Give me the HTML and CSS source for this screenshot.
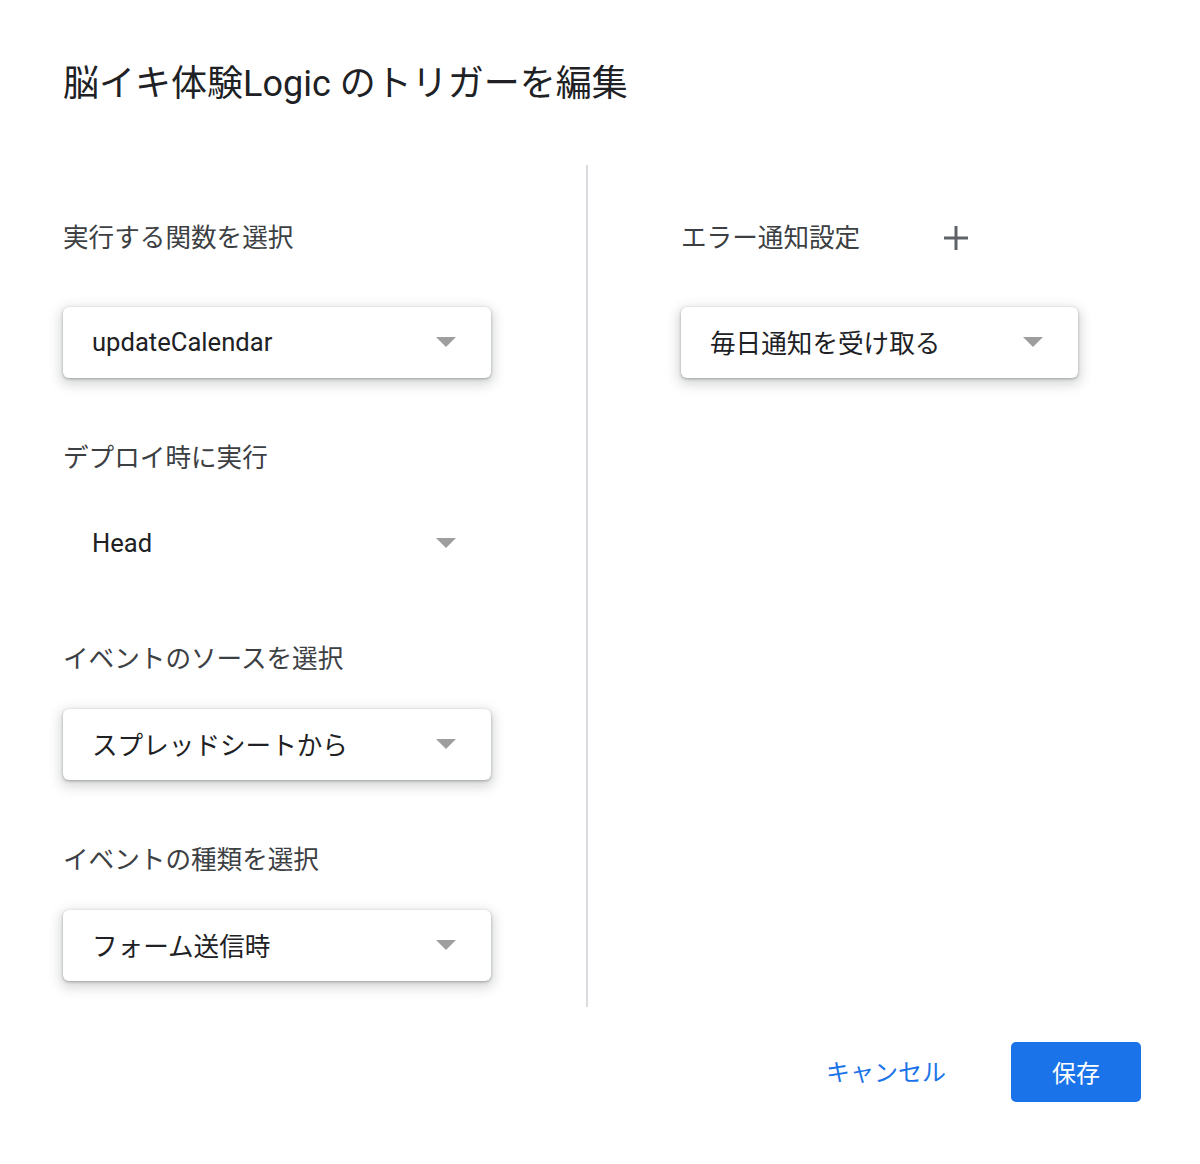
FILE: index.html
```html
<!DOCTYPE html>
<html lang="ja">
<head>
<meta charset="utf-8">
<link rel="stylesheet" href="styles.css">
</head>
<body>
<div class="dialog">
  <h1 class="title">脳イキ体験Logic のトリガーを編集</h1>
  <div class="columns">
    <div class="col-left">
      <div class="label label-first">実行する関数を選択</div>
      <div class="select"><span>updateCalendar</span><i class="arrow"></i></div>
      <div class="label">デプロイ時に実行</div>
      <div class="select flat"><span>Head</span><i class="arrow"></i></div>
      <div class="label">イベントのソースを選択</div>
      <div class="select"><span>スプレッドシートから</span><i class="arrow"></i></div>
      <div class="label">イベントの種類を選択</div>
      <div class="select"><span>フォーム送信時</span><i class="arrow"></i></div>
    </div>
    <div class="divider"></div>
    <div class="col-right">
      <div class="label label-first row-label">
        <span>エラー通知設定</span>
        <svg class="plus" width="26" height="26" viewBox="0 0 26 26"><path d="M13 1v24M1 13h24" stroke="#5f6368" stroke-width="3" fill="none"/></svg>
      </div>
      <div class="select narrow"><span>毎日通知を受け取る</span><i class="arrow"></i></div>
    </div>
  </div>
  <div class="actions">
    <button class="btn-text">キャンセル</button>
    <button class="btn-primary">保存</button>
  </div>
</div>
</body>
</html>
```
FILE: styles.css
```css
html, body {
  margin: 0;
  padding: 0;
  background: #fff;
}
body {
  font-family: Roboto, "Noto Sans CJK JP", sans-serif;
  color: #202124;
}
.dialog {
  width: 1200px;
  height: 1164px;
  box-sizing: border-box;
  padding: 60px 59px 0 63px;
}
.title {
  margin: 0;
  font-size: 36px;
  font-weight: 400;
  line-height: 48px;
  color: #202124;
}
.columns {
  display: flex;
  margin-top: 57px;
  height: 842px;
}
.col-left {
  width: 523px;
  display: flex;
  flex-direction: column;
}
.divider {
  width: 2px;
  background: #dadce0;
  height: 842px;
}
.col-right {
  padding-left: 93px;
  display: flex;
  flex-direction: column;
}
.label {
  font-size: 25.6px;
  line-height: 40px;
  color: #3c4043;
  margin-top: 60px;
  margin-bottom: 30px;
}
.label.label-first {
  margin-top: 53px;
  margin-bottom: 49px;
}
.row-label {
  display: flex;
  align-items: center;
  gap: 83px;
}
.plus {
  display: block;
}
.select {
  width: 428px;
  height: 71px;
  box-sizing: border-box;
  border-radius: 6px;
  background: #fff;
  box-shadow: 0 1px 3px rgba(60, 64, 67, 0.4), 0 4px 12px 3px rgba(60, 64, 67, 0.2);
  display: flex;
  align-items: center;
  justify-content: space-between;
  padding: 0 35px 2px 29px;
  font-size: 25.6px;
  color: #202124;
}
.select.flat {
  box-shadow: none;
}
.select.narrow {
  width: 397px;
}
.arrow {
  width: 0;
  height: 0;
  border-left: 10px solid transparent;
  border-right: 10px solid transparent;
  border-top: 10px solid #9e9e9e;
}
.actions {
  display: flex;
  justify-content: flex-end;
  align-items: center;
  gap: 65px;
  margin-top: 35px;
}
button {
  font-family: Roboto, "Noto Sans CJK JP", sans-serif;
  font-size: 24px;
  border: none;
  cursor: pointer;
}
.btn-text {
  background: transparent;
  color: #1a73e8;
  padding: 0 0 4px 0;
}
.btn-primary {
  width: 130px;
  height: 60px;
  background: #1a73e8;
  color: #fff;
  border-radius: 5px;
  padding: 0 0 2px 0;
}
```
